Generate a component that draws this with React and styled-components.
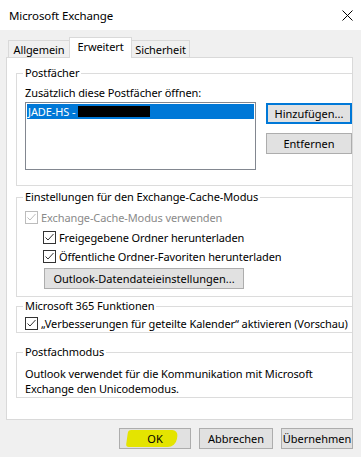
import styled, { createGlobalStyle } from "styled-components"

const Global = createGlobalStyle`
  html, body { margin: 0; padding: 0; background: #f0f0f0; }
  body {
    font-family: "Noto Sans", "Liberation Sans", sans-serif;
    font-size: 11px;
    letter-spacing: -0.1px;
    color: #000;
  }
  * { box-sizing: border-box; }
`

const Dialog = styled.div`
  width: 361px;
  height: 457px;
  background: #f0f0f0;
  overflow: hidden;
  display: flex;
  flex-direction: column;
`

const TitleBar = styled.header`
  height: 30px;
  flex-shrink: 0;
  background: #fff;
  display: flex;
  align-items: center;
  justify-content: space-between;
  padding: 0 8px 0 9px;
  font-size: 11.5px;
`

const Content = styled.div`
  padding: 7px 8px 0 6px;
  display: flex;
  flex-direction: column;
`

const TabStrip = styled.div`
  height: 20px;
  display: flex;
  align-items: flex-end;
  padding-left: 2px;
`

const Tab = styled.div`
  width: ${(p) => p.$w}px;
  height: ${(p) => (p.$active ? 21 : 17)}px;
  margin-bottom: ${(p) => (p.$active ? -1 : 0)}px;
  margin-left: ${(p) => (p.$active ? -1 : 0)}px;
  margin-right: ${(p) => (p.$active ? -1 : 0)}px;
  position: relative;
  z-index: ${(p) => (p.$active ? 2 : 1)};
  border: 1px solid #d9d9d9;
  border-bottom: none;
  background: ${(p) => (p.$active ? "#fff" : "#f0f0f0")};
  display: flex;
  align-items: center;
  justify-content: center;
  padding-bottom: ${(p) => (p.$active ? 3 : 0)}px;
  white-space: nowrap;
`

const Panel = styled.div`
  height: 363px;
  background: #fff;
  border: 1px solid #d9d9d9;
  overflow: hidden;
  padding: 7px 0 0 9px;
  display: flex;
  flex-direction: column;
`

const Group = styled.fieldset`
  margin: ${(p) => p.$mt}px 0 0 0;
  padding: ${(p) => p.$pad};
  border: 1px solid #dcdcdc;
  width: 345px;
  min-width: 0;
  flex-shrink: 0;
`

const Legend = styled.legend`
  padding: 0 2px;
  margin-left: -2px;
  line-height: 16px;
  white-space: nowrap;
`

const Label = styled.div`
  line-height: 16px;
  white-space: nowrap;
`

const Row = styled.div`
  display: flex;
  align-items: flex-start;
  margin-top: 1px;
`

const ListBox = styled.div`
  width: 231px;
  height: 68px;
  border: 1px solid #828790;
  background: #fff;
  padding: 1px;
  flex-shrink: 0;
`

const ListItem = styled.div`
  height: 15px;
  line-height: 15px;
  background: #0078d7;
  color: #fff;
  padding-left: 1px;
  display: flex;
  align-items: center;
  white-space: nowrap;
`

const Redacted = styled.span`
  display: inline-block;
  width: 72px;
  height: 11px;
  background: #000;
  margin-left: 3px;
`

const SideButtons = styled.div`
  margin: 1px 0 0 10px;
  display: flex;
  flex-direction: column;
  gap: 9px;
`

const Button = styled.button`
  width: ${(p) => p.$w}px;
  height: 21px;
  flex-shrink: 0;
  background: #e1e1e1;
  border: ${(p) => (p.$default ? "2px solid #0078d7" : "1px solid #adadad")};
  margin: 0;
  margin-left: ${(p) => p.$ml || 0}px;
  margin-top: ${(p) => p.$mt || 0}px;
  padding: 0;
  font: inherit;
  color: #000;
  position: relative;
  white-space: nowrap;
`

const ButtonText = styled.span`
  position: relative;
  z-index: 1;
`

const Highlight = styled.span`
  position: absolute;
  left: 7px;
  top: 1px;
  width: 50px;
  height: 17px;
  background: #e4e400;
  border-radius: 3px 6px 8px 3px;
  transform: skewX(-8deg);
`

const CheckRow = styled.label`
  display: flex;
  align-items: center;
  gap: 3px;
  height: 16px;
  margin-top: ${(p) => p.$mt || 0}px;
  padding-left: ${(p) => p.$indent || 0}px;
  color: ${(p) => (p.$disabled ? "#8a8a8a" : "#000")};
  white-space: nowrap;
`

const Box = styled.span`
  width: 13px;
  height: 13px;
  flex-shrink: 0;
  border: 1px solid ${(p) => (p.$disabled ? "#bcbcbc" : "#333")};
  background: #fff;
  display: flex;
`

const Text = styled.div`
  line-height: 15px;
  white-space: nowrap;
`

const Footer = styled.div`
  display: flex;
  justify-content: flex-end;
  gap: 8px;
  padding: 8px 0 0 0;
`

function Check({ disabled }) {
  const c = disabled ? "#bcbcbc" : "#333"
  return (
    <Box $disabled={disabled}>
      <svg width="11" height="11" viewBox="0 0 11 11">
        <path d="M1.5 5.5 L4 8 L9.5 2" fill="none" stroke={c} strokeWidth="1" />
      </svg>
    </Box>
  )
}

function Close() {
  return (
    <svg width="11" height="11" viewBox="0 0 11 11">
      <path d="M0.5 0.5 L10.5 10.5 M10.5 0.5 L0.5 10.5" stroke="#000" strokeWidth="1" />
    </svg>
  )
}

export default function App() {
  return (
    <Dialog>
      <Global />
      <TitleBar>
        <span>Microsoft Exchange</span>
        <Close />
      </TitleBar>
      <Content>
        <TabStrip>
          <Tab $w={62}>Allgemein</Tab>
          <Tab $w={63} $active>Erweitert</Tab>
          <Tab $w={59}>Sicherheit</Tab>
        </TabStrip>
        <Panel>
          <Group $mt={0} $pad="4px 0 15px 8px">
            <Legend>Postfächer</Legend>
            <Label>Zusätzlich diese Postfächer öffnen:</Label>
            <Row>
              <ListBox>
                <ListItem>
                  JADE-HS -<Redacted />
                </ListItem>
              </ListBox>
              <SideButtons>
                <Button $w={86} $default>Hinzufügen...</Button>
                <Button $w={86}>Entfernen</Button>
              </SideButtons>
            </Row>
          </Group>

          <Group $mt={3} $pad="4px 0 7px 8px">
            <Legend>Einstellungen für den Exchange-Cache-Modus</Legend>
            <CheckRow $disabled>
              <Check disabled />
              Exchange-Cache-Modus verwenden
            </CheckRow>
            <CheckRow $mt={4} $indent={18}>
              <Check />
              Freigegebene Ordner herunterladen
            </CheckRow>
            <CheckRow $mt={3} $indent={18}>
              <Check />
              Öffentliche Ordner-Favoriten herunterladen
            </CheckRow>
            <Button $w={200} $ml={19} $mt={4}>Outlook-Datendateieinstellungen...</Button>
          </Group>

          <Group $mt={1} $pad="1px 0 1px 8px">
            <Legend>Microsoft 365 Funktionen</Legend>
            <CheckRow>
              <Check />
              „Verbesserungen für geteilte Kalender“ aktivieren (Vorschau)
            </CheckRow>
          </Group>

          <Group $mt={11} $pad="6px 0 1px 8px">
            <Legend>Postfachmodus</Legend>
            <Text>
              Outlook verwendet für die Kommunikation mit Microsoft
              <br />
              Exchange den Unicodemodus.
            </Text>
          </Group>
        </Panel>
        <Footer>
          <Button $w={72}>
            <Highlight />
            <ButtonText>OK</ButtonText>
          </Button>
          <Button $w={74}>Abbrechen</Button>
          <Button $w={72}>Übernehmen</Button>
        </Footer>
      </Content>
    </Dialog>
  )
}
